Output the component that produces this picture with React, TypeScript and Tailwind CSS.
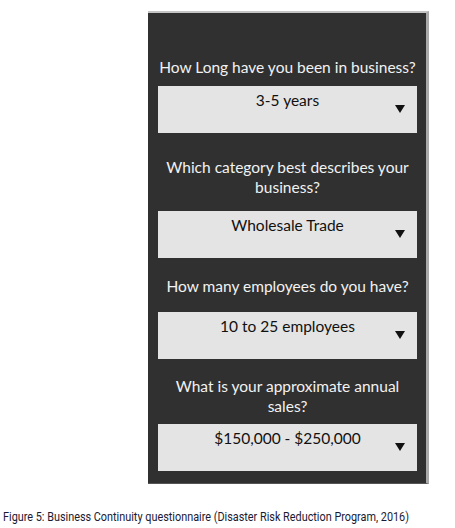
import React from "react";

const Arrow = () => (
  <svg width="10" height="8" viewBox="0 0 10 8" className="absolute right-[12px] top-[19px]">
    <polygon points="0,0 10,0 5,8" fill="#111" />
  </svg>
);

const Select = ({ value, className = "" }: { value: string; className?: string }) => (
  <div className={`relative h-[47px] w-[259px] bg-[#e4e4e4] ${className}`}>
    <div className="pt-[4px] text-center text-[15.5px] leading-[20px] text-[#111]">{value}</div>
    <Arrow />
  </div>
);

export default function App() {
  return (
    <div className="relative h-[528px] w-[455px] overflow-hidden bg-white">
      <div
        className="ml-[148px] mt-[11px] flex h-[473px] w-[281px] flex-col border-t-2 border-r-[3px] border-b border-t-[#c4c4c4] border-r-[#a9a9a9] border-b-[#555] bg-[#303030] pl-[10px] text-[#f2f2f2]"
        style={{ fontFamily: "Lato, 'Open Sans', sans-serif" }}
      >
        <div className="mt-[44px] w-[259px] whitespace-nowrap text-center text-[15.5px] leading-[20px]">How Long have you been in business?</div>
        <Select value="3-5 years" className="mt-[9px]" />
        <div className="mt-[24px] w-[259px] text-center text-[15.5px] leading-[20px]">
          Which category best describes your business?
        </div>
        <Select value="Wholesale Trade" className="mt-[14px]" />
        <div className="mt-[18px] w-[259px] text-center text-[15.5px] leading-[20px]">How many employees do you have?</div>
        <Select value="10 to 25 employees" className="mt-[16px]" />
        <div className="mt-[17px] w-[259px] px-[12px] text-center text-[15.5px] leading-[20px]">
          What is your approximate annual sales?
        </div>
        <Select value="$150,000 - $250,000" className="mt-[8px]" />
      </div>
      <div
        className="absolute left-[3px] top-[509px] origin-left scale-x-[0.835] whitespace-nowrap text-[13px] leading-[16px] text-[#1a1a33]"
        style={{ fontFamily: "Roboto, sans-serif" }}
      >
        Figure 5: Business Continuity questionnaire (Disaster Risk Reduction Program, 2016)
      </div>
    </div>
  );
}
